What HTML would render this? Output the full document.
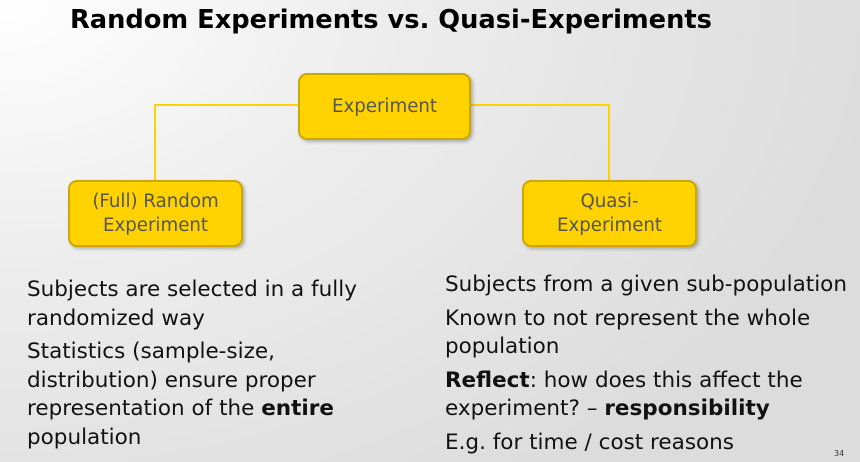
<!DOCTYPE html>
<html><head><style>
body{margin:0;width:860px;height:462px;overflow:hidden;position:relative;font-family:"DejaVu Sans","Liberation Sans",sans-serif;background:radial-gradient(ellipse 900px 600px at 0px 0px,#ffffff 0%,#eeeeee 40%,#dcdcdc 100%);}
.t{position:absolute;left:70px;top:5px;font-weight:bold;font-size:25.7px;color:#000;white-space:nowrap}
.box{position:absolute;background:#ffd200;border:2px solid #c9a800;border-radius:9px;box-shadow:2px 2px 3px rgba(0,0,0,.25);color:#555;font-size:18.2px;text-align:center;display:flex;align-items:center;justify-content:center;line-height:24px;box-sizing:border-box}
.l{position:absolute;background:#ffd200}
.p{position:absolute;font-size:21.5px;line-height:28.5px;color:#111;white-space:nowrap}
.p div{margin-bottom:5px}
</style></head><body>
<div class="t">Random Experiments vs. Quasi-Experiments</div>
<div class="l" style="left:154px;top:104px;width:146px;height:2px"></div>
<div class="l" style="left:154px;top:104px;width:2px;height:78px"></div>
<div class="l" style="left:468px;top:104px;width:142px;height:2px"></div>
<div class="l" style="left:608px;top:104px;width:2px;height:78px"></div>
<div class="box" style="left:298px;top:73px;width:173px;height:67px">Experiment</div>
<div class="box" style="left:68px;top:180px;width:175px;height:67px">(Full) Random<br>Experiment</div>
<div class="box" style="left:522px;top:180px;width:175px;height:67px">Quasi-<br>Experiment</div>
<div class="p" style="left:27px;top:276px">
<div>Subjects are selected in a fully<br>randomized way</div>
<div>Statistics (sample-size,<br>distribution) ensure proper<br>representation of the <b>entire</b><br>population</div>
</div>
<div class="p" style="left:445px;top:271px">
<div>Subjects from a given sub-population</div>
<div>Known to not represent the whole<br>population</div>
<div><b>Reflect</b>: how does this affect the<br>experiment? – <b>responsibility</b></div>
<div>E.g. for time / cost reasons</div>
</div>
<div style="position:absolute;left:834px;top:449px;font-size:8px;color:#333">34</div>
</body></html>
